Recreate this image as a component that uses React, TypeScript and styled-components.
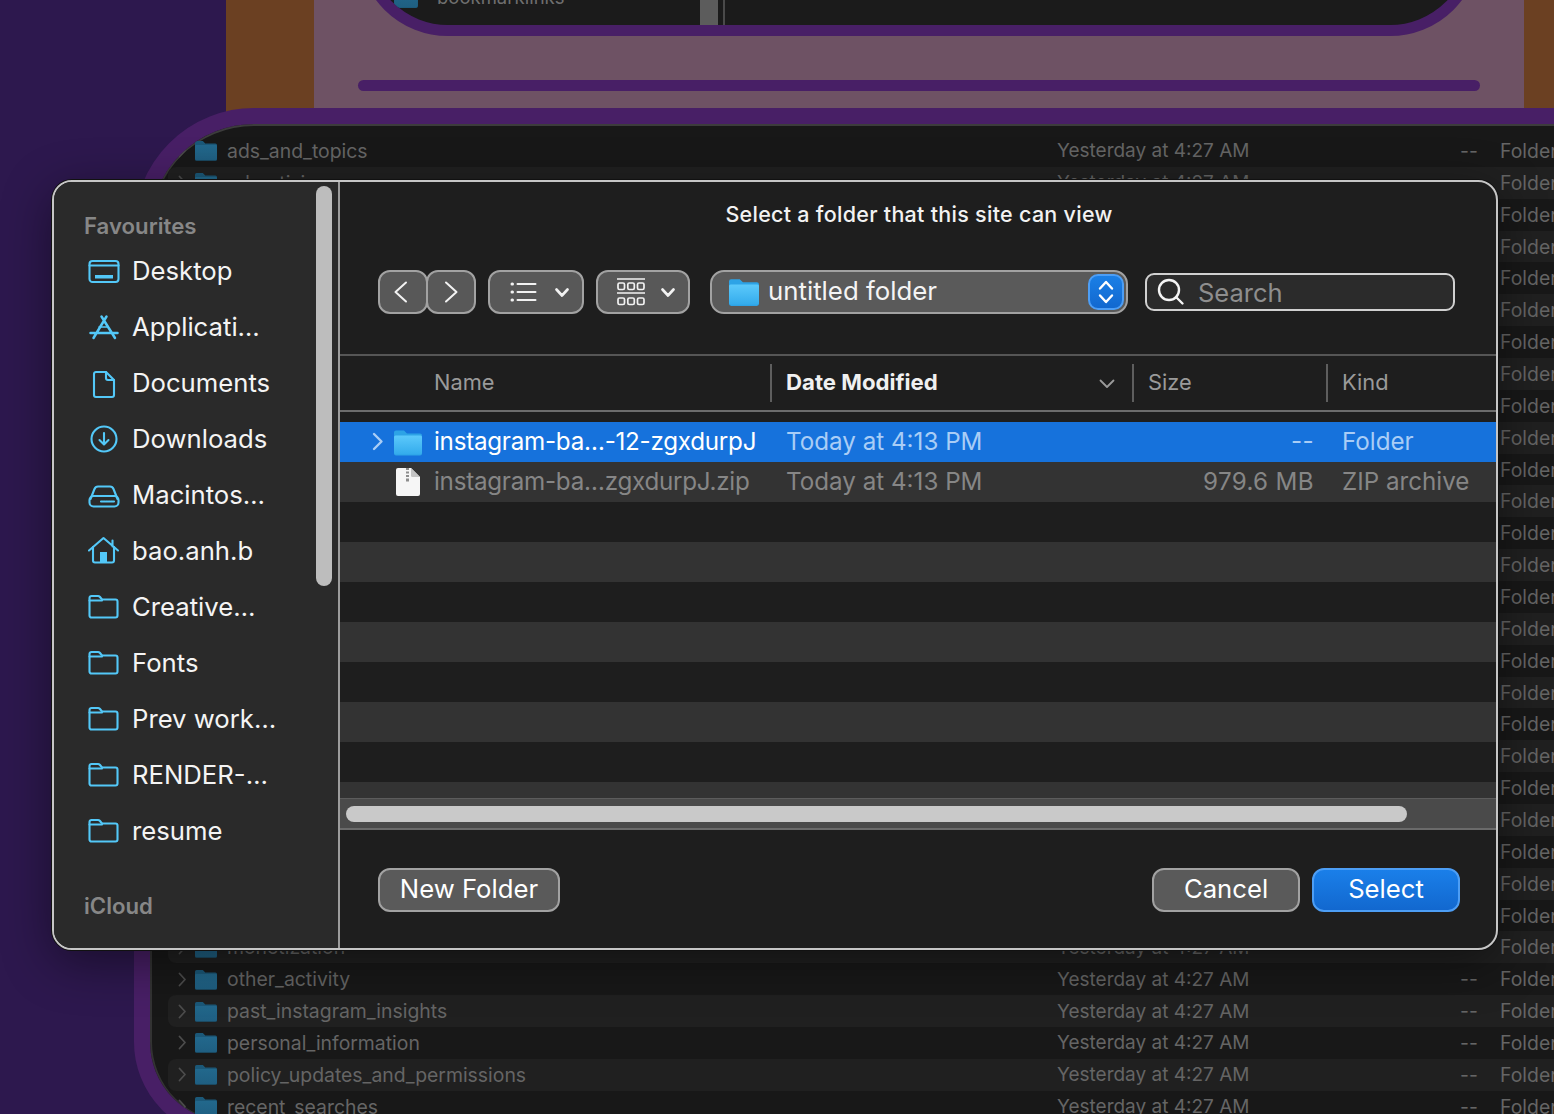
import styled, { createGlobalStyle } from "styled-components";

const GlobalStyle = createGlobalStyle`
  html, body {
    margin: 0;
    background: #2e1a4f;
    font-family: Inter, "Noto Sans", "Liberation Sans", sans-serif;
  }
`;

const Desktop = styled.div`
  position: relative;
  display: flex;
  width: 1554px;
  height: 1114px;
  overflow: hidden;
`;

const Wallpaper = styled.div<{ $width: number; $color: string }>`
  width: ${(p) => p.$width}px;
  height: 100%;
  background: ${(p) => p.$color};
`;

const TopWindow = styled.div`
  position: absolute;
  left: 358px;
  top: -200px;
  box-sizing: border-box;
  width: 1122px;
  height: 236px;
  display: flex;
  align-items: flex-end;
  border: 11px solid #481f66;
  border-radius: 90px;
  background: #1b1b1b;
  overflow: hidden;
`;

const TopRowName = styled.div`
  display: flex;
  align-items: center;
  gap: 19px;
  width: 306px;
  margin-left: 25px;
  margin-bottom: 17px;
  font-size: 18.5px;
  color: #6f6f6f;
  white-space: nowrap;
`;

const TopScrollThumb = styled.div`
  width: 18px;
  height: 40px;
  background: #5c5c5c;
`;

const TopDivider = styled.div`
  width: 2px;
  height: 40px;
  margin-left: 5px;
  background: #4a4a4a;
`;

const DockBar = styled.div`
  position: absolute;
  left: 358px;
  top: 80px;
  width: 1122px;
  height: 11px;
  border-radius: 6px;
  background: #481f66;
`;

const BackWindow = styled.div`
  position: absolute;
  left: 134px;
  top: 108px;
  box-sizing: border-box;
  width: 1600px;
  height: 1030px;
  border: 16px solid #481f66;
  border-radius: 120px 0 0 96px;
  background: #181818;
  box-shadow: inset 0 2px 0 #3c3c3c, inset 2px 0 0 #333;
  overflow: hidden;
`;

const BackList = styled.div`
  padding-top: 11px;
`;

const BackRow = styled.div<{ $alt: boolean }>`
  display: grid;
  grid-template-columns: 17px 22px 840px 403px 40px auto;
  align-items: center;
  height: 31.87px;
  margin-left: 18px;
  padding-left: 10px;
  border-radius: 8px 0 0 8px;
  background: ${(p) => (p.$alt ? "#202020" : "transparent")};
  font-size: 19.4px;
  color: #656565;
  white-space: nowrap;
`;

const BackName = styled.span`
  padding-left: 10px;
`;

const BackDate = styled.span`
  font-size: 19px;
`;

const Dialog = styled.div`
  position: absolute;
  left: 52px;
  top: 180px;
  box-sizing: border-box;
  width: 1446px;
  height: 770px;
  display: flex;
  border: 2px solid #c6c6c6;
  border-radius: 20px;
  background: #1e1e1e;
  box-shadow: 0 0 0 1px #111, 0 12px 50px rgba(0, 0, 0, 0.45);
  overflow: hidden;
`;

const Sidebar = styled.aside`
  position: relative;
  box-sizing: border-box;
  width: 286px;
  flex-shrink: 0;
  padding-top: 32px;
  background: #2a2a2a;
  border-right: 2px solid #9c9c9c;
`;

const SidebarThumb = styled.div`
  position: absolute;
  left: 262px;
  top: 4px;
  width: 16px;
  height: 400px;
  border-radius: 8px;
  background: #bdbdbd;
`;

const SectionLabel = styled.div<{ $top?: number }>`
  height: 24px;
  margin-top: ${(p) => p.$top ?? 0}px;
  margin-bottom: 5px;
  padding-left: 30px;
  font-size: 22.2px;
  line-height: 24px;
  font-weight: 600;
  color: #878787;
`;

const SidebarRow = styled.div`
  display: flex;
  align-items: center;
  gap: 12px;
  height: 56px;
  padding-left: 34px;
  font-size: 25.7px;
  color: #f4f4f4;
`;

const SidebarLabel = styled.span`
  margin-top: -2px;
`;

const Main = styled.main`
  flex: 1;
  min-width: 0;
  display: flex;
  flex-direction: column;
`;

const Title = styled.div`
  height: 64px;
  padding-left: 2px;
  line-height: 64px;
  text-align: center;
  font-size: 21.5px;
  font-weight: 500;
  letter-spacing: 0.28px;
  color: #f2f2f2;
`;

const Toolbar = styled.div`
  display: flex;
  align-items: center;
  height: 44px;
  padding: 24px 0 40px 38px;
  border-bottom: 2px solid #565656;
`;

const NavButton = styled.div<{ $back?: boolean }>`
  box-sizing: border-box;
  display: flex;
  align-items: center;
  justify-content: center;
  width: 50px;
  height: 44px;
  margin-left: ${(p) => (p.$back ? 0 : -2)}px;
  padding-right: ${(p) => (p.$back ? 4 : 0)}px;
  border: 2px solid #a2a2a2;
  border-radius: 12px;
  background: #585858;
`;

const MenuButton = styled.div<{ $width: number; $inset: number; $gap: number }>`
  box-sizing: border-box;
  display: flex;
  align-items: center;
  gap: ${(p) => p.$gap}px;
  width: ${(p) => p.$width}px;
  height: 44px;
  margin-left: 12px;
  padding-left: ${(p) => p.$inset}px;
  border: 2px solid #a2a2a2;
  border-radius: 12px;
  background: #585858;
`;

const PathPopup = styled.div`
  box-sizing: border-box;
  display: flex;
  align-items: center;
  gap: 9px;
  width: 418px;
  height: 44px;
  margin-left: 20px;
  padding: 0 2px 0 17px;
  border: 2px solid #a2a2a2;
  border-radius: 14px;
  background: #5a5a5a;
  font-size: 25.8px;
  color: #f4f4f4;
`;

const PathLabel = styled.span`
  flex: 1;
  margin-top: -3px;
`;

const Stepper = styled.div`
  box-sizing: border-box;
  display: flex;
  align-items: center;
  justify-content: center;
  width: 36px;
  height: 36px;
  border: 2px solid #4d9ef5;
  border-radius: 10px;
  background: linear-gradient(#1a7fe6, #1268cf);
`;

const SearchField = styled.div`
  box-sizing: border-box;
  display: flex;
  align-items: center;
  gap: 13px;
  width: 310px;
  height: 38px;
  margin-left: 17px;
  padding-left: 10px;
  border: 2px solid #d0d0d0;
  border-radius: 9px;
  background: #2b2b2b;
  font-size: 25.5px;
  color: #8e8e8e;
`;

const ColumnHeader = styled.div`
  display: grid;
  grid-template-columns: 431px 362px 194px 1fr;
  height: 54px;
  border-bottom: 2px solid #6c6c6c;
  margin-bottom: 10px;
`;

const HeaderCell = styled.div<{ $indent?: number; $divider?: boolean; $active?: boolean }>`
  position: relative;
  display: flex;
  align-items: center;
  justify-content: space-between;
  padding: 0 18px ${(p) => (p.$active ? 4 : 2)}px ${(p) => p.$indent ?? 15}px;
  font-size: ${(p) => (p.$active ? 22.2 : 21.8)}px;
  font-weight: ${(p) => (p.$active ? 700 : 400)};
  color: ${(p) => (p.$active ? "#f0f0f0" : "#9a9a9a")};

  svg {
    margin-top: 5px;
  }

  ${(p) =>
    p.$divider &&
    `&::before {
      content: "";
      position: absolute;
      left: -1px;
      top: 8px;
      bottom: 8px;
      width: 2px;
      background: #5e5e5e;
    }`}
`;

const FileList = styled.div`
  flex: 1;
  min-height: 0;
  overflow: hidden;
`;

const FileRow = styled.div<{ $tone: "selected" | "alt" | "plain" }>`
  box-sizing: border-box;
  display: grid;
  grid-template-columns: 431px 362px 194px 1fr;
  align-items: center;
  height: 40px;
  padding-bottom: 2px;
  font-size: 24.2px;
  background: ${(p) =>
    p.$tone === "selected" ? "#1672dc" : p.$tone === "alt" ? "#333333" : "transparent"};
  color: ${(p) => (p.$tone === "selected" ? "#ffffff" : "#868686")};
`;

const NameCell = styled.div`
  display: flex;
  align-items: center;
  height: 100%;
  letter-spacing: -0.25px;
  white-space: nowrap;
`;

const DisclosureSlot = styled.div`
  display: flex;
  justify-content: center;
  width: 54px;
  padding-left: 22px;
  box-sizing: border-box;
`;

const IconSlot = styled.div`
  display: flex;
  justify-content: flex-start;
  width: 40px;
  margin-top: 2px;
`;

const ZipSlot = styled(IconSlot)`
  padding-left: 2px;
  box-sizing: border-box;
`;

const DateCell = styled.div<{ $muted?: boolean }>`
  padding-left: 15px;
  color: ${(p) => (p.$muted ? "#a9cdf6" : "inherit")};
`;

const SizeCell = styled.div<{ $muted?: boolean }>`
  padding-right: 13px;
  text-align: right;
  letter-spacing: 0.35px;
  color: ${(p) => (p.$muted ? "#a9cdf6" : "inherit")};
`;

const HScroll = styled.div`
  box-sizing: border-box;
  display: flex;
  align-items: center;
  height: 32px;
  padding: 0 89px 0 6px;
  background: #4a4a4a;
  border-top: 1px solid #5c5c5c;
  border-bottom: 2px solid #6a6a6a;
`;

const HThumb = styled.div`
  width: 1061px;
  height: 16px;
  border-radius: 8px;
  background: #c9c9c9;
`;

const Footer = styled.div`
  display: flex;
  align-items: flex-start;
  height: 80px;
  padding: 38px 36px 0 38px;
`;

const FooterButton = styled.div<{ $width: number; $primary?: boolean; $push?: boolean }>`
  box-sizing: border-box;
  display: flex;
  align-items: center;
  justify-content: center;
  width: ${(p) => p.$width}px;
  height: 44px;
  margin-left: ${(p) => (p.$push ? "auto" : p.$primary ? "12px" : "0")};
  padding-bottom: 4px;
  border: 2px solid ${(p) => (p.$primary ? "#4d9ef5" : "#a2a2a2")};
  border-radius: 12px;
  background: ${(p) => (p.$primary ? "linear-gradient(#1a7fe9, #1268cf)" : "#5a5a5a")};
  font-size: 25.7px;
  color: #ffffff;
`;

const SIDE = "#53c8f8";

const sidebarGlyphs: Record<string, React.ReactNode> = {
  desktop: (
    <>
      <rect x="1.500" y="6" width="29" height="21" rx="3" />
      <path d="M1.500 10.500h29" />
      <rect x="7" y="20" width="18" height="3.500" fill={SIDE} stroke="none" />
    </>
  ),
  apps: (
    <>
      <path d="M13.500 5.500 27 27M18.500 5.500 5.500 27M2.500 22h27" strokeWidth="2.500" />
      <path d="M11 16h8" strokeWidth="1.500" />
    </>
  ),
  doc: (
    <>
      <path d="M8 5h10l8 8v15a2 2 0 0 1-2 2H8a2 2 0 0 1-2-2V7a2 2 0 0 1 2-2z" />
      <path d="M18 5v6a2 2 0 0 0 2 2h6" />
    </>
  ),
  download: (
    <>
      <circle cx="16" cy="16" r="12.500" />
      <path d="M16 10v11M11.500 17l4.500 4.500 4.500-4.500" />
    </>
  ),
  drive: (
    <>
      <rect x="1.500" y="17" width="29" height="10.500" rx="4" />
      <path d="M2.500 20 6.500 10A4 4 0 0 1 10 7.500h12a4 4 0 0 1 3.500 2.500l4 10" />
      <path d="M13 22.500h13" strokeDasharray="1.500 1" />
    </>
  ),
  home: (
    <>
      <path d="M1 15.500 15.500 3 30 15.500M24.500 5.500v6" />
      <path d="M5 12v13.500a2 2 0 0 0 2 2h17a2 2 0 0 0 2-2V12" />
      <rect x="12" y="17" width="7" height="11" fill={SIDE} stroke="none" />
    </>
  ),
  folder: (
    <>
      <path d="M1.500 7a2 2 0 0 1 2-2h6.500a2.500 2.500 0 0 1 1.800.8l1.600 1.900a2.500 2.500 0 0 0 1.900.8h12.200a2 2 0 0 1 2 2v14a2 2 0 0 1-2 2h-24a2 2 0 0 1-2-2z" />
      <path d="M1.500 9.500h12.500" />
    </>
  ),
};

const SidebarIcon = ({ name }: { name: string }) => (
  <svg width="32" height="32" viewBox="0 0 32 32" fill="none" stroke={SIDE} strokeWidth="2.100" strokeLinecap="round" strokeLinejoin="round">
    {sidebarGlyphs[name]}
  </svg>
);

const FolderGlyph = ({ width, height, id, top, bottom, edge }: { width: number; height: number; id: string; top: string; bottom: string; edge: string }) => (
  <svg width={width} height={height} viewBox="0 0 28 26">
    <defs>
      <linearGradient id={id} x1="0" y1="0" x2="0" y2="1">
        <stop offset="0" stopColor={top} />
        <stop offset="1" stopColor={bottom} />
      </linearGradient>
    </defs>
    <path d="M0 3a2 2 0 0 1 2-2h8l3 3h13a2 2 0 0 1 2 2v18a2 2 0 0 1-2 2H2a2 2 0 0 1-2-2z" fill={edge} />
    <path d="M0 7.500a1.500 1.500 0 0 1 1.500-1.500h25A1.500 1.500 0 0 1 28 7.500V23a2 2 0 0 1-2 2H2a2 2 0 0 1-2-2z" fill={`url(#${id})`} />
  </svg>
);

const ChevronGlyph = ({ d, w, h, stroke, strokeWidth }: { d: string; w: number; h: number; stroke: string; strokeWidth: number }) => (
  <svg width={w} height={h} viewBox={`0 0 ${w} ${h}`} fill="none" stroke={stroke} strokeWidth={strokeWidth} strokeLinecap="round" strokeLinejoin="round">
    <path d={d} />
  </svg>
);

const MenuChevron = () => <ChevronGlyph d="M1.500 1.500 7 7.500l5.500-6" w={14} h={9} stroke="#f2f2f2" strokeWidth={2.600} />;

const ListIcon = () => (
  <svg width="27" height="20" viewBox="0 0 27 20" fill="none" stroke="#f2f2f2" strokeWidth="2" strokeLinecap="round">
    <path d="M7.500 2h18M7.500 10h18M7.500 18h18" />
    <path d="M2 2h.5M2 10h.5M2 18h.5" strokeWidth="3" />
  </svg>
);

const GridIcon = () => (
  <svg width="28" height="28" viewBox="0 0 28 28" fill="none" stroke="#f2f2f2" strokeWidth="1.700">
    <path d="M0 1h28M0 15h28" />
    <rect x="1" y="5" width="6.500" height="6.500" rx="1.500" />
    <rect x="10.800" y="5" width="6.500" height="6.500" rx="1.500" />
    <rect x="20.500" y="5" width="6.500" height="6.500" rx="1.500" />
    <rect x="1" y="20" width="6.500" height="6.500" rx="1.500" />
    <rect x="10.800" y="20" width="6.500" height="6.500" rx="1.500" />
    <rect x="20.500" y="20" width="6.500" height="6.500" rx="1.500" />
  </svg>
);

const ZipIcon = () => (
  <svg width="24" height="28" viewBox="0 0 24 28">
    <path d="M0 2a2 2 0 0 1 2-2h13l9 9v17a2 2 0 0 1-2 2H2a2 2 0 0 1-2-2z" fill="#f6f6f6" />
    <path d="M15 0v7.500A1.500 1.500 0 0 0 16.500 9H24z" fill="#c4c4c4" />
    <path d="M10 0h3v2h-3zM10 3.500h3v2h-3zM10 7h3v2h-3zM10 10.500h3v3h-3z" fill="#8d8d8d" />
  </svg>
);

const SearchIcon = () => (
  <svg width="28" height="28" viewBox="0 0 28 28" fill="none" stroke="#f4f4f4" strokeWidth="2.400" strokeLinecap="round">
    <circle cx="12" cy="12" r="10" />
    <path d="M19 19l6.500 6.500" />
  </svg>
);

const favourites = [
  ["desktop", "Desktop"],
  ["apps", "Applicati…"],
  ["doc", "Documents"],
  ["download", "Downloads"],
  ["drive", "Macintos…"],
  ["home", "bao.anh.b"],
  ["folder", "Creative…"],
  ["folder", "Fonts"],
  ["folder", "Prev work…"],
  ["folder", "RENDER-…"],
  ["folder", "resume"],
];

const backRows = [
  "ads_and_topics", "advertising", "apps_and_websites", "autofill_information", "comments",
  "connections", "contacts", "content", "devices", "events", "fundraisers", "guides",
  "information_about_you", "likes", "link_history", "login_and_account", "logged_information",
  "media", "messages", "meta_spark", "meta_verified", "mobile_networks", "music", "monetization_eligibility",
  "notifications", "monetization", "other_activity", "past_instagram_insights", "personal_information",
  "policy_updates_and_permissions", "recent_searches",
];

const BackgroundWindows = () => (
  <>
    <TopWindow>
      <TopRowName>
        <FolderGlyph width={24} height={22} id="topFolder" top="#22688c" bottom="#1f5f82" edge="#1b5878" />
        bookmarklinks
      </TopRowName>
      <TopScrollThumb />
      <TopDivider />
    </TopWindow>
    <DockBar />
    <BackWindow>
      <BackList>
        {backRows.map((name, i) => (
          <BackRow key={name} $alt={i % 2 === 1}>
            <ChevronGlyph d="M1.500 1.500 7 7.500l-5.500 6" w={9} h={15} stroke="#4c4c4c" strokeWidth={1.800} />
            <FolderGlyph width={22} height={21} id={`back${i}`} top="#22688c" bottom="#1f5f82" edge="#1b5878" />
            <BackName>{name}</BackName>
            <BackDate>Yesterday at 4:27 AM</BackDate>
            <span>--</span>
            <span>Folder</span>
          </BackRow>
        ))}
      </BackList>
    </BackWindow>
  </>
);

const stripes = ["plain", "alt", "plain", "alt", "plain", "alt", "plain", "alt"] as const;

const App = () => (
  <>
    <GlobalStyle />
    <Desktop>
      <Wallpaper $width={226} $color="#2d184e" />
      <Wallpaper $width={88} $color="#6b4022" />
      <Wallpaper $width={1210} $color="#6e5264" />
      <Wallpaper $width={30} $color="#6b4022" />
      <BackgroundWindows />
      <Dialog>
        <Sidebar>
          <SidebarThumb />
          <SectionLabel>Favourites</SectionLabel>
          {favourites.map(([icon, label]) => (
            <SidebarRow key={label}>
              <SidebarIcon name={icon} />
              <SidebarLabel>{label}</SidebarLabel>
            </SidebarRow>
          ))}
          <SectionLabel $top={35}>iCloud</SectionLabel>
        </Sidebar>
        <Main>
          <Title>Select a folder that this site can view</Title>
          <Toolbar>
            <NavButton $back>
              <ChevronGlyph d="M12 1.500 1.500 11 12 20.500" w={14} h={22} stroke="#f2f2f2" strokeWidth={2} />
            </NavButton>
            <NavButton>
              <ChevronGlyph d="M2 1.500 12.500 11 2 20.500" w={14} h={22} stroke="#f2f2f2" strokeWidth={2} />
            </NavButton>
            <MenuButton $width={96} $inset={20} $gap={18}>
              <ListIcon />
              <MenuChevron />
            </MenuButton>
            <MenuButton $width={94} $inset={19} $gap={16}>
              <GridIcon />
              <MenuChevron />
            </MenuButton>
            <PathPopup>
              <FolderGlyph width={30} height={28} id="pathFolder" top="#5cc9fb" bottom="#33abec" edge="#2da3e6" />
              <PathLabel>untitled folder</PathLabel>
              <Stepper>
                <svg width="18" height="28" viewBox="0 0 18 28" fill="none" stroke="#fff" strokeWidth="2.400" strokeLinecap="round" strokeLinejoin="round">
                  <path d="M3 10.500 9 4l6 6.500M3 17.500l6 6.500 6-6.500" />
                </svg>
              </Stepper>
            </PathPopup>
            <SearchField>
              <SearchIcon />
              Search
            </SearchField>
          </Toolbar>
          <ColumnHeader>
            <HeaderCell $indent={94}>Name</HeaderCell>
            <HeaderCell $divider $active>
              Date Modified
              <ChevronGlyph d="M1.500 1.500 8 8l6.500-6.500" w={16} h={10} stroke="#9a9a9a" strokeWidth={1.800} />
            </HeaderCell>
            <HeaderCell $divider>Size</HeaderCell>
            <HeaderCell $divider>Kind</HeaderCell>
          </ColumnHeader>
          <FileList>
            <FileRow $tone="selected">
              <NameCell>
                <DisclosureSlot>
                  <ChevronGlyph d="M2 2l7.500 7.500L2 17" w={12} h={19} stroke="#a9cdf6" strokeWidth={2.400} />
                </DisclosureSlot>
                <IconSlot>
                  <FolderGlyph width={28} height={27} id="rowFolder" top="#5cc9fb" bottom="#33abec" edge="#2da3e6" />
                </IconSlot>
                instagram-ba…-12-zgxdurpJ
              </NameCell>
              <DateCell $muted>Today at 4:13 PM</DateCell>
              <SizeCell $muted>--</SizeCell>
              <DateCell $muted>Folder</DateCell>
            </FileRow>
            <FileRow $tone="alt">
              <NameCell>
                <DisclosureSlot />
                <ZipSlot>
                  <ZipIcon />
                </ZipSlot>
                instagram-ba…zgxdurpJ.zip
              </NameCell>
              <DateCell>Today at 4:13 PM</DateCell>
              <SizeCell>979.6 MB</SizeCell>
              <DateCell>ZIP archive</DateCell>
            </FileRow>
            {stripes.map((tone, i) => (
              <FileRow key={i} $tone={tone} />
            ))}
          </FileList>
          <HScroll>
            <HThumb />
          </HScroll>
          <Footer>
            <FooterButton $width={182}>New Folder</FooterButton>
            <FooterButton $width={148} $push>Cancel</FooterButton>
            <FooterButton $width={148} $primary>Select</FooterButton>
          </Footer>
        </Main>
      </Dialog>
    </Desktop>
  </>
);

export default App;
